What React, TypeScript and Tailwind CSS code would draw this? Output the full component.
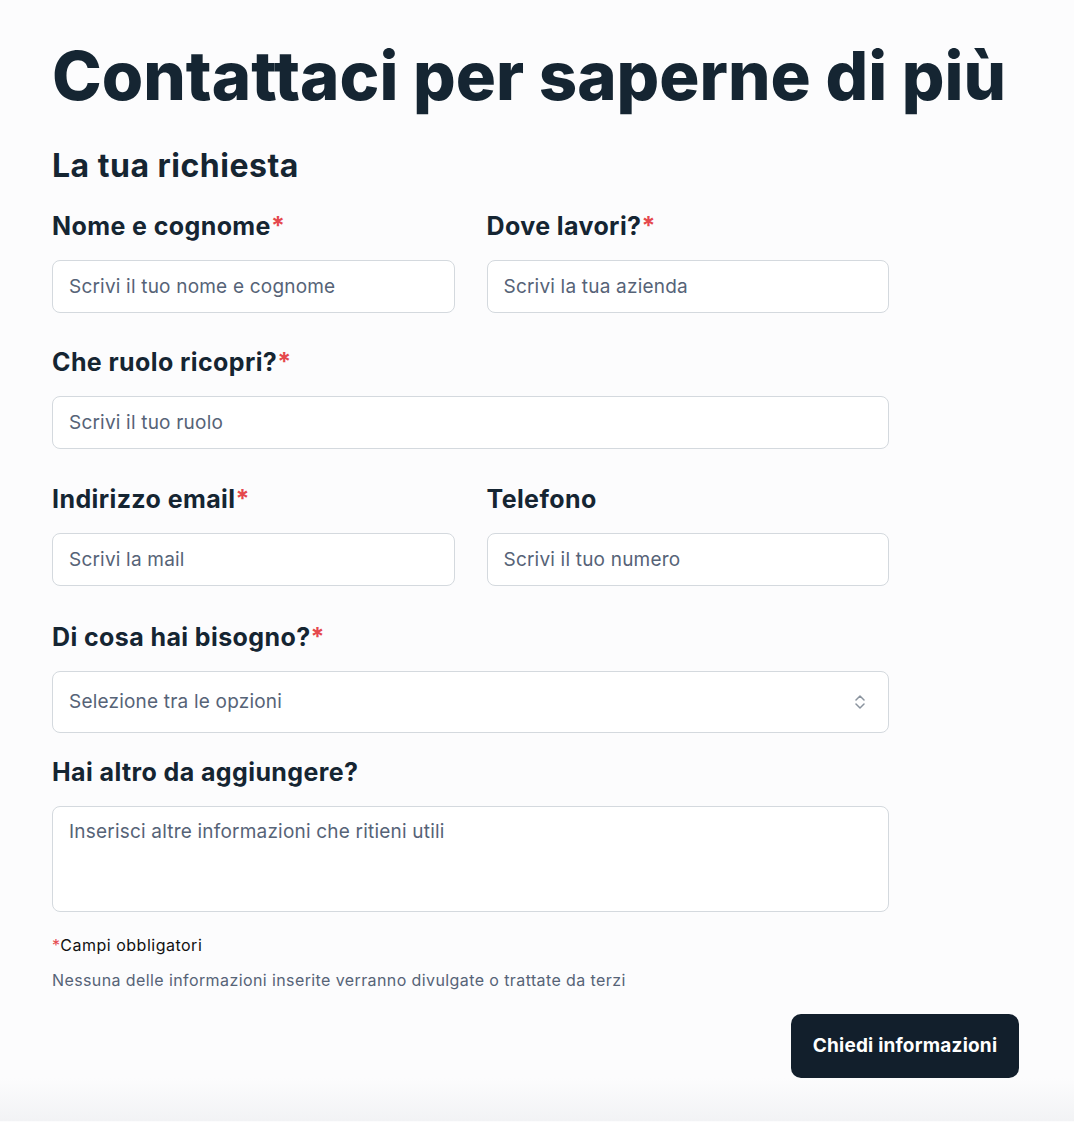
import React from "react";

const Req = () => <span className="text-[#e5484d]">*</span>;

function Label({ text, req }: { text: string; req?: boolean }) {
  return (
    <label className="block text-[25px] leading-[28px] font-bold text-[#152532] tracking-[0.4px]">
      {text}
      {req && <Req />}
    </label>
  );
}

function Field({ label, req, placeholder }: { label: string; req?: boolean; placeholder: string }) {
  return (
    <div className="flex flex-col gap-5">
      <Label text={label} req={req} />
      <input
        type="text"
        placeholder={placeholder}
        className="h-[53px] w-full rounded-lg border border-[#d4d9de] bg-white px-4 text-[19px] tracking-[0.2px] text-[#152532] outline-none placeholder:text-[#566377]"
      />
    </div>
  );
}

export default function App() {
  return (
    <div className="min-h-screen bg-[#fcfcfd] font-['Inter',sans-serif] text-[#152532]">
      <div className="px-[52px] pt-[36px]">
        <h1 className="text-[67px] leading-[80px] font-extrabold">
          Contattaci per saperne di più
        </h1>
        <h2 className="mt-[32px] text-[32px] leading-[36px] font-bold tracking-[0.5px]">La tua richiesta</h2>

        <form className="mt-[28px] w-[837px]" onSubmit={(e) => e.preventDefault()}>
          <div className="grid grid-cols-2 gap-x-8">
            <Field label="Nome e cognome" req placeholder="Scrivi il tuo nome e cognome" />
            <Field label="Dove lavori?" req placeholder="Scrivi la tua azienda" />
          </div>
          <div className="mt-[35px]">
            <Field label="Che ruolo ricopri?" req placeholder="Scrivi il tuo ruolo" />
          </div>
          <div className="mt-[36px] grid grid-cols-2 gap-x-8">
            <Field label="Indirizzo email" req placeholder="Scrivi la mail" />
            <Field label="Telefono" placeholder="Scrivi il tuo numero" />
          </div>
          <div className="mt-[37px] flex flex-col gap-5">
            <Label text="Di cosa hai bisogno?" req />
            <div className="flex h-[62px] items-center justify-between rounded-lg border border-[#d4d9de] bg-white pl-4 pr-[23px] text-[19px] tracking-[0.2px] text-[#566377]">
              <span>Selezione tra le opzioni</span>
              <svg width="10" height="16" viewBox="0 0 10 16" fill="none" stroke="#8a939e" strokeWidth="1.5" strokeLinecap="round" strokeLinejoin="round">
                <path d="M1 6 5 2 9 6" />
                <path d="M1 10 5 14 9 10" />
              </svg>
            </div>
          </div>
          <div className="mt-[25px] flex flex-col gap-5">
            <Label text="Hai altro da aggiungere?" />
            <textarea
              placeholder="Inserisci altre informazioni che ritieni utili"
              className="h-[106px] w-full resize-none rounded-lg border border-[#d4d9de] bg-white px-4 py-[13px] text-[19px] leading-[24px] tracking-[0.2px] outline-none placeholder:text-[#566377]"
            />
          </div>
          <p className="mt-[21px] text-[16px] leading-[24px] tracking-[0.5px] text-[#111]">
            <Req />Campi obbligatori
          </p>
          <p className="mt-[11px] text-[16px] leading-[24px] tracking-[0.4px] text-[#566377]">
            Nessuna delle informazioni inserite verranno divulgate o trattate da terzi
          </p>
        </form>

        <div className="mt-[22px] flex justify-end pr-[3px]">
          <button className="h-[64px] w-[228px] rounded-[10px] bg-[#121f2c] text-[19px] tracking-[0.2px] font-bold text-white">
            Chiedi informazioni
          </button>
        </div>
      </div>
      <div className="h-[43px] bg-gradient-to-b from-[#fcfcfd] to-[#f2f3f5]" />
    </div>
  );
}
